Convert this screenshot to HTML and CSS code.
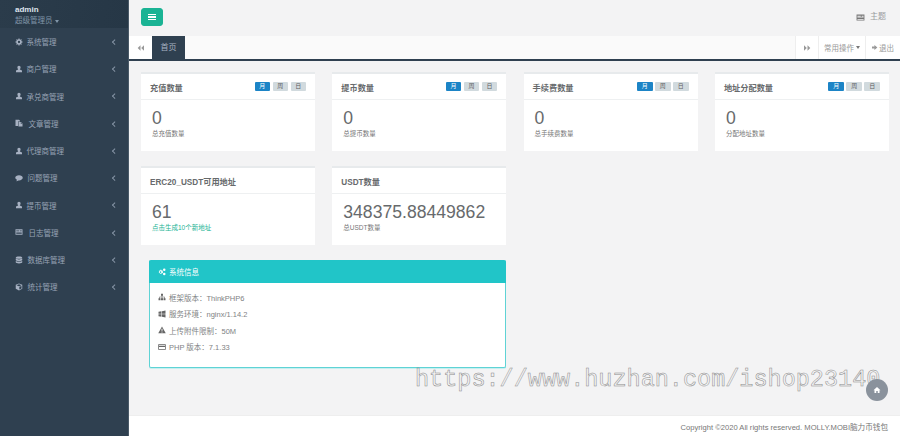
FILE: index.html
```html
<!DOCTYPE html>
<html lang="zh-CN">
<head>
    <meta charset="UTF-8">
    <title>后台首页</title>
    <link rel="stylesheet" href="styles.css">
</head>
<body>
    <div class="wrapper">
        <div class="sidebar">
            <div class="profile">
                <div class="profile-name">admin</div>
                <div class="profile-role">超级管理员 <span class="caret"></span></div>
            </div>
            <ul class="menu">
                <li><svg class="menu-icon" viewBox="0 0 16 16"><path d="M7 1h2l.4 2 1.3.5L12.400 2.400l1.200 1.200-1.100 1.700.5 1.300 2 .4v2l-2 .4-.5 1.300 1.100 1.700-1.200 1.200-1.700-1.100-1.300.5-.4 2H7l-.4-2-1.300-.5-1.700 1.100-1.200-1.200 1.100-1.700-.5-1.300-2-.4V7l2-.4.500-1.300-1.100-1.700 1.200-1.200 1.700 1.100 1.300-.5zM8 5.700a2.300 2.300 0 1 0 0 4.600 2.300 2.300 0 0 0 0-4.600z"/></svg><span>系统管理</span><i class="arrow"></i></li>
                <li><svg class="menu-icon" viewBox="0 0 16 16"><path d="M8 1.500c-2 0-3.200 1.500-3.200 3.500 0 1.300.6 2.400 1.400 3v1L2 11v3.500h12V11L9.800 9V8c.8-.6 1.400-1.700 1.400-3 0-2-1.200-3.500-3.200-3.500z"/></svg><span>商户管理</span><i class="arrow"></i></li>
                <li><svg class="menu-icon" viewBox="0 0 16 16"><path d="M8 1.500c-2 0-3.200 1.500-3.200 3.500 0 1.300.6 2.400 1.400 3v1L2 11v3.500h12V11L9.800 9V8c.8-.6 1.400-1.700 1.400-3 0-2-1.200-3.500-3.200-3.500z"/></svg><span>承兑商管理</span><i class="arrow"></i></li>
                <li><svg class="menu-icon" viewBox="0 0 16 16"><path d="M1 1.500h7l2 2V5H6v9H1zM7 6h5l3 3v6H7zM11.500 6.500V9.500h3z"/></svg><span class="text-wide">文章管理</span><i class="arrow"></i></li>
                <li><svg class="menu-icon" viewBox="0 0 16 16"><path d="M8 1.500c-2 0-3.200 1.500-3.200 3.500 0 1.300.6 2.400 1.400 3v1L2 11v3.500h12V11L9.800 9V8c.8-.6 1.400-1.700 1.400-3 0-2-1.200-3.500-3.200-3.500z"/></svg><span>代理商管理</span><i class="arrow"></i></li>
                <li><svg class="menu-icon" viewBox="0 0 16 16"><path d="M8 2.500c4.200 0 7.500 2.300 7.500 5.200S12.200 13 8 13l-1.200-.1C5.500 14 4 14.500 2.500 14.500c.8-.8 1.300-1.700 1.400-2.800C1.900 10.700.5 9.300.500 7.700.5 4.800 3.800 2.500 8 2.500z"/></svg><span class="text-mid">问题管理</span><i class="arrow"></i></li>
                <li><svg class="menu-icon" viewBox="0 0 16 16"><path d="M8 1.500c-2 0-3.200 1.500-3.200 3.500 0 1.300.6 2.400 1.400 3v1L2 11v3.500h12V11L9.800 9V8c.8-.6 1.400-1.700 1.400-3 0-2-1.200-3.500-3.200-3.500z"/></svg><span>提币管理</span><i class="arrow"></i></li>
                <li><svg class="menu-icon" viewBox="0 0 16 16"><path d="M1 2.500h14v11H1zM2.500 5v1.500h6V5zm0 3v1h11V8zm0 2.500V12h11v-1.500zM10 5v1.500h3.500V5z" fill-rule="evenodd"/></svg><span class="text-wide">日志管理</span><i class="arrow"></i></li>
                <li><svg class="menu-icon" viewBox="0 0 16 16"><path d="M8 1c3.600 0 6.500 1 6.500 2.300S11.600 5.600 8 5.600 1.500 4.600 1.500 3.300 4.400 1 8 1zM1.500 5.200C2.800 6.300 5.300 6.800 8 6.800s5.200-.5 6.500-1.600V8c0 1.300-2.900 2.300-6.500 2.300S1.500 9.300 1.500 8zm0 4.700c1.300 1.100 3.800 1.600 6.500 1.600s5.200-.5 6.500-1.600v2.800C14.500 14 11.600 15 8 15s-6.500-1-6.500-2.300z"/></svg><span class="text-mid">数据库管理</span><i class="arrow"></i></li>
                <li><svg class="menu-icon" viewBox="0 0 16 16"><path d="M8 1l6.500 2.700v8L8 15l-6.500-3.300v-8zM3 4.500l5 2 5-2-5-2zM8.700 7.700v5.500l4.300-2.200V6z" fill-rule="evenodd"/></svg><span class="text-mid">统计管理</span><i class="arrow"></i></li>
            </ul>
        </div>

        <div class="main">
            <div class="topbar">
                <button class="toggle-btn"><span></span><span></span><span></span></button>
                <div class="theme">
                    <svg class="theme-icon" viewBox="0 0 16 16"><path d="M1 2.500h14v11H1zM2.500 5v1.500h6V5zm0 3v1h11V8zm0 2.500V12h11v-1.500zM10 5v1.500h3.500V5z" fill-rule="evenodd"/></svg>
                    主题
                </div>
            </div>

            <div class="tabs">
                <div class="tab-nav">
                    <svg class="nav-icon" viewBox="0 0 10 8"><path d="M5 0v8L1 4zM10 0v8L6 4z"/></svg>
                </div>
                <div class="tab-active">首页</div>
                <div class="tabs-right">
                    <div class="tab-tool tab-forward">
                        <svg class="nav-icon" viewBox="0 0 10 8"><path d="M0 0v8l4-4zM5 0v8l4-4z"/></svg>
                    </div>
                    <div class="tab-tool tab-ops">常用操作 <span class="caret caret-gray"></span></div>
                    <div class="tab-tool tab-exit">
                        <svg class="exit-icon" viewBox="0 0 10 8"><path d="M0 2.500h4V0l5 4-5 4V5.500H0z"/></svg>退出
                    </div>
                </div>
            </div>

            <div class="content">
                <div class="card-grid">
                    <div class="card">
                        <div class="card-title">
                            <h5>充值数量</h5>
                            <div class="labels"><span class="label on">月</span><span class="label">周</span><span class="label">日</span></div>
                        </div>
                        <div class="card-body">
                            <div class="num">0</div>
                            <small>总充值数量</small>
                        </div>
                    </div>
                    <div class="card">
                        <div class="card-title">
                            <h5>提币数量</h5>
                            <div class="labels"><span class="label on">月</span><span class="label">周</span><span class="label">日</span></div>
                        </div>
                        <div class="card-body">
                            <div class="num">0</div>
                            <small>总提币数量</small>
                        </div>
                    </div>
                    <div class="card">
                        <div class="card-title">
                            <h5>手续费数量</h5>
                            <div class="labels"><span class="label on">月</span><span class="label">周</span><span class="label">日</span></div>
                        </div>
                        <div class="card-body">
                            <div class="num">0</div>
                            <small>总手续费数量</small>
                        </div>
                    </div>
                    <div class="card">
                        <div class="card-title">
                            <h5>地址分配数量</h5>
                            <div class="labels"><span class="label on">月</span><span class="label">周</span><span class="label">日</span></div>
                        </div>
                        <div class="card-body">
                            <div class="num">0</div>
                            <small>分配地址数量</small>
                        </div>
                    </div>
                    <div class="card">
                        <div class="card-title">
                            <h5>ERC20_USDT可用地址</h5>
                        </div>
                        <div class="card-body">
                            <div class="num">61</div>
                            <small class="link">点击生成10个新地址</small>
                        </div>
                    </div>
                    <div class="card">
                        <div class="card-title">
                            <h5>USDT数量</h5>
                        </div>
                        <div class="card-body">
                            <div class="num">348375.88449862</div>
                            <small>总USDT数量</small>
                        </div>
                    </div>
                </div>

                <div class="panel">
                    <div class="panel-head">
                        <svg class="panel-icon" viewBox="0 0 16 16"><path d="M5.500 3l1 .3.300 1.300 1.200.7 1.200-.4.900 1.100-.7 1 0 1.400.7 1-.9 1.100-1.200-.4-1.200.7-.3 1.300h-1.400l-.3-1.300-1.200-.7-1.200.4-.9-1.100.7-1V7l-.7-1 .9-1.100 1.200.4 1.200-.7.300-1.300zM5 6.500a1.700 1.700 0 1 0 0 3.400 1.700 1.700 0 0 0 0-3.400zM12.500 1a2.500 2.500 0 1 1 0 5 2.500 2.500 0 0 1 0-5zM12.500 9.500a2.500 2.500 0 1 1 0 5 2.500 2.500 0 0 1 0-5z"/></svg>
                        系统信息
                    </div>
                    <div class="panel-body">
                        <p><svg class="info-icon" viewBox="0 0 16 16"><path d="M6 1.500h4v4H8.700v2H13.500v3H15v4h-4v-4h1.300V8.700H8.700v1.800H10v4H6v-4h1.300V8.700H3.700v1.800H5v4H1v-4h1.500v-3h4.800v-2H6z"/></svg>框架版本：ThinkPHP6</p>
                        <p><svg class="info-icon" viewBox="0 0 16 16"><path d="M1 3.500l6-1v5H1zM8 2.300l7-1.100v6.300H8zM1 8.500h6v5l-6-1zM8 8.500h7v6.300l-7-1.100z"/></svg>服务环境：nginx/1.14.2</p>
                        <p><svg class="info-icon" viewBox="0 0 16 16"><path d="M8 1l7.500 13.500H.500zM7 5.500l.3 5h1.400l.3-5zM7 11.500v1.700h2v-1.700z" fill-rule="evenodd"/></svg>上传附件限制：50M</p>
                        <p><svg class="info-icon" viewBox="0 0 16 16"><path d="M.500 2.500h15v11H.500zM2 4v1.500h12V4zm0 4v4h12V8z" fill-rule="evenodd"/></svg>PHP 版本：7.1.33</p>
                    </div>
                </div>
            </div>

            <div class="footer">Copyright ©2020 All rights reserved. MOLLY.MOBI脑力币钱包</div>
        </div>
    </div>

    <div class="watermark">https://www.huzhan.com/ishop23140</div>
    <div class="home-btn">
        <svg class="home-icon" viewBox="0 0 16 16"><path d="M8 2l7 6.500h-2V14H9.500v-4h-3v4H3V8.500H1z"/></svg>
    </div>
</body>
</html>
```

FILE: styles.css
```css
* {
    box-sizing: border-box;
}
html, body {
    margin: 0;
    height: 100%;
    overflow: hidden;
}
body {
    font-family: "Liberation Sans", "Noto Sans CJK SC", sans-serif;
    font-size: 7.500px;
    color: #676a6c;
    background: #f3f3f4;
}
.wrapper {
    display: flex;
    height: 436px;
}

/* 左侧菜单 */
.sidebar {
    width: 129px;
    flex-shrink: 0;
    background: #2f4050;
    border-right: 1px solid #4a5a68;
}
.profile {
    height: 28px;
    padding: 5px 15px 0;
    background: linear-gradient(100deg, #2b3c4b, #263746);
}
.profile-name {
    font-size: 8px;
    font-weight: 700;
    line-height: 10px;
    color: #dfe4ed;
}
.profile-role {
    font-size: 7.500px;
    line-height: 12px;
    color: #8095a8;
}
.caret {
    display: inline-block;
    vertical-align: middle;
    border-top: 3px solid #8095a8;
    border-left: 2.500px solid transparent;
    border-right: 2.500px solid transparent;
}
.caret-gray {
    border-top-color: #777;
}
.menu {
    list-style: none;
    margin: 0;
    padding: 0;
}
.menu li {
    display: flex;
    align-items: center;
    height: 27.250px;
    padding: 0 12px 0 15px;
    font-size: 7.500px;
    color: #98a3b5;
}
.menu-icon {
    width: 8px;
    height: 8px;
    margin-right: 3.500px;
    fill: #a7b1c2;
}
.menu li span {
    flex: 1;
}
.menu li span.text-mid {
    padding-left: 1px;
}
.menu li span.text-wide {
    padding-left: 2px;
}
.arrow {
    width: 3.500px;
    height: 3.500px;
    border-left: 1px solid #8795a6;
    border-bottom: 1px solid #8795a6;
    transform: rotate(45deg);
}

/* 右侧主体 */
.main {
    flex: 1;
    min-width: 0;
    display: flex;
    flex-direction: column;
}
.topbar {
    height: 36px;
    padding: 8px 14px 8px 12px;
    display: flex;
    justify-content: space-between;
    align-items: flex-start;
    background: #f3f3f4;
}
.toggle-btn {
    width: 22px;
    height: 18px;
    padding: 0;
    border: 1px solid #1ab394;
    border-radius: 3px;
    background: #1ab394;
    display: flex;
    flex-direction: column;
    align-items: center;
    justify-content: center;
    gap: 1px;
}
.toggle-btn span {
    width: 8px;
    height: 1.500px;
    background: #fff;
}
.theme {
    display: flex;
    align-items: center;
    margin-top: 1px;
    font-size: 8px;
    line-height: 16px;
    color: #999c9e;
}
.theme-icon {
    width: 9px;
    height: 9px;
    margin-right: 5px;
    fill: #777;
}
.tabs {
    height: 25px;
    display: flex;
    background: #fafafa;
    border-bottom: 2px solid #2f4050;
}
.tab-nav {
    width: 23px;
    display: flex;
    align-items: center;
    justify-content: center;
    background: #fff;
}
.nav-icon {
    width: 7px;
    height: 6px;
    fill: #999;
}
.tab-active {
    width: 33px;
    background: #2f4050;
    color: #a7b1c2;
    font-size: 8px;
    line-height: 23px;
    text-align: center;
}
.tabs-right {
    margin-left: auto;
    display: flex;
    background: #fff;
}
.tab-tool {
    display: flex;
    align-items: center;
    justify-content: center;
    gap: 2px;
    border-left: 1px solid #eee;
    color: #999;
    font-size: 7.500px;
}
.tab-forward {
    width: 23px;
}
.tab-ops {
    width: 47px;
}
.tab-exit {
    width: 35px;
    gap: 1px;
}
.exit-icon {
    width: 6px;
    height: 5px;
    fill: #999;
}
.content {
    flex: 1;
    padding: 11px 12px 0 12px;
}
.card-grid {
    display: grid;
    grid-template-columns: repeat(4, 174px);
    column-gap: 17.300px;
    row-gap: 15px;
}
.card {
    height: 79px;
    background: #fff;
    border-top: 2px solid #e7eaec;
}
.card-title {
    height: 26px;
    padding: 0 9px;
    display: flex;
    align-items: center;
    justify-content: space-between;
    border-bottom: 1px solid #eef0f1;
}
.card-title h5 {
    margin: 0;
    font-size: 8.200px;
    font-weight: 700;
    color: #676a6c;
}
.labels {
    display: flex;
    gap: 2.500px;
}
.label {
    width: 15.500px;
    height: 9.500px;
    border-radius: 1px;
    background: #d1dade;
    color: #5e5e5e;
    font-size: 6px;
    line-height: 9.500px;
    text-align: center;
}
.label.on {
    background: #1c84c6;
    color: #fff;
}
.card-body {
    padding: 8px 11px;
}
.num {
    font-size: 17.600px;
    line-height: 21px;
    color: #676a6c;
}
.card-body small {
    display: block;
    font-size: 6.500px;
    line-height: 9px;
    color: #777;
}
.card-body small.link {
    color: #1ab394;
}

/* 系统信息 */
.panel {
    width: 357px;
    height: 108px;
    margin: 15px 0 0 8px;
    border: 1px solid #5fd3d5;
    border-top: 0;
    border-radius: 2px;
    background: #fff;
    box-shadow: 0 1px 0 #c5eff0;
}
.panel-head {
    height: 23px;
    margin: 0 -1px;
    padding: 0 9px;
    display: flex;
    align-items: center;
    background: #21c5c8;
    border-radius: 2px 2px 0 0;
    color: #fff;
    font-size: 7.500px;
}
.panel-icon {
    width: 8px;
    height: 8px;
    margin-right: 3px;
    fill: #fff;
}
.panel-body {
    padding: 6px 8px;
}
.panel-body p {
    display: flex;
    align-items: center;
    margin: 0;
    height: 16.500px;
    font-size: 7.500px;
    color: #808284;
}
.info-icon {
    width: 8px;
    height: 8px;
    margin-right: 3px;
    fill: #666;
}
.footer {
    height: 21px;
    padding: 0 12px;
    background: #fff;
    border-top: 1px solid #eee;
    text-align: right;
    font-size: 7.600px;
    line-height: 23px;
    color: #777;
}

/* 水印和回到首页按钮 */
.watermark {
    position: absolute;
    left: 415px;
    top: 365px;
    font-family: "Liberation Mono", monospace;
    font-size: 23.500px;
    line-height: 30px;
    white-space: nowrap;
    color: #f3f3f4;
    -webkit-text-stroke: 0.500px #777;
    opacity: 0.85;
}
.home-btn {
    position: absolute;
    left: 866px;
    top: 379px;
    width: 22px;
    height: 22px;
    border-radius: 50%;
    background: #8a929c;
    display: flex;
    align-items: center;
    justify-content: center;
}
.home-icon {
    width: 8px;
    height: 8px;
    fill: #fff;
}
```
